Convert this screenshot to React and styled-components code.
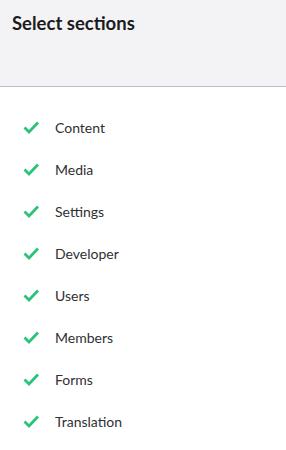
import React from "react";
import styled, { createGlobalStyle } from "styled-components";

const sections = [
  "Content",
  "Media",
  "Settings",
  "Developer",
  "Users",
  "Members",
  "Forms",
  "Translation",
];

const GlobalStyle = createGlobalStyle`
  body {
    margin: 0;
    background: #fff;
    font-family: Lato, "Open Sans", sans-serif;
  }
`;

const Panel = styled.div`
  width: 286px;
  height: 450px;
  display: flex;
  flex-direction: column;
  background: #fff;
`;

const Header = styled.div`
  height: 87px;
  box-sizing: border-box;
  padding: 11px 12px 0 12px;
  background: #f3f3f5;
  border-bottom: 1px solid #bbbbcc;
`;

const Title = styled.h2`
  margin: 0;
  font-size: 18.5px;
  font-weight: 700;
  color: #1b1b1d;
  line-height: 24px;
`;

const List = styled.ul`
  list-style: none;
  margin: 0;
  padding: 19px 0 0 0;
`;

const Item = styled.li`
  height: 42px;
  display: flex;
  align-items: center;
  padding-left: 23px;
  font-size: 14px;
  color: #303033;
`;

const Check = styled.svg`
  width: 16px;
  height: 14px;
  margin-right: 16px;
  flex-shrink: 0;
`;

const CheckIcon = () => (
  <Check viewBox="0 0 16 14">
    <path
      d="M1.5 7.5 L6 12 L15 2.5"
      fill="none"
      stroke="#2bc37c"
      strokeWidth="2.8"
      strokeLinecap="butt"
      strokeLinejoin="miter"
    />
  </Check>
);

const App = () => {
  return (
    <>
      <GlobalStyle />
      <Panel>
        <Header>
          <Title>Select sections</Title>
        </Header>
        <List>
          {sections.map((name) => (
            <Item key={name}>
              <CheckIcon />
              {name}
            </Item>
          ))}
        </List>
      </Panel>
    </>
  );
};

export default App;
